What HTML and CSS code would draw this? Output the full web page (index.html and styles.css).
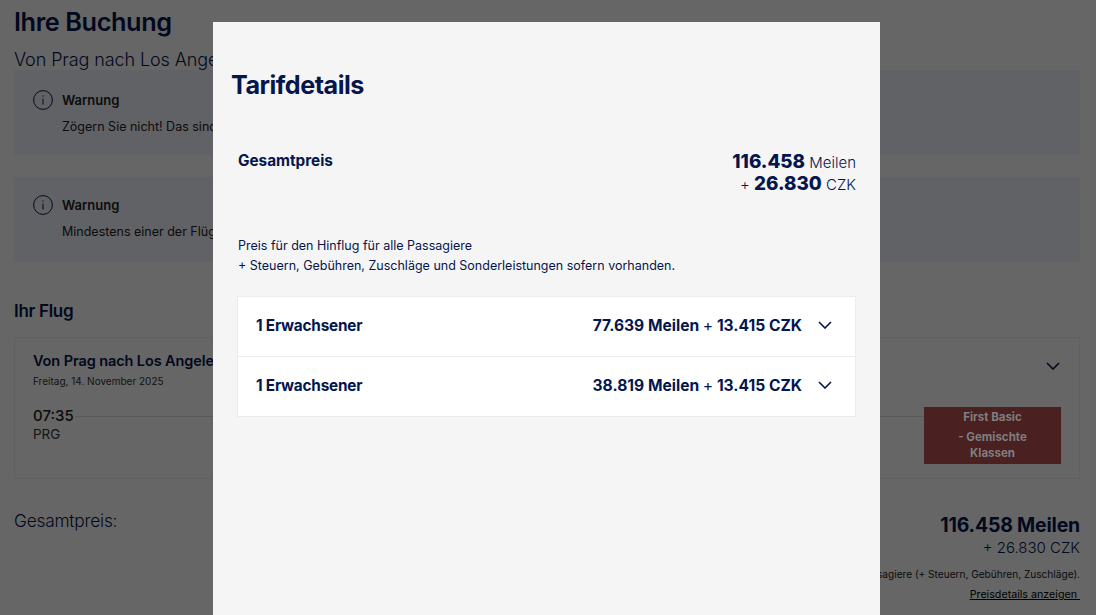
FILE: index.html
```html
<!DOCTYPE html>
<html lang="de">
<head>
  <meta charset="UTF-8">
  <meta name="viewport" content="width=device-width, initial-scale=1.0">
  <title>Ihre Buchung</title>
  <link rel="stylesheet" href="styles.css">
</head>
<body>
  <div class="page">
    <h1>Ihre Buchung</h1>
    <p class="route">Von Prag nach Los Angeles</p>

    <div class="warning">
      <svg class="info-icon" viewBox="0 0 20 20"><circle cx="10" cy="10" r="9.4"/><path d="M10 8.6v6M10 5.4v1.2"/></svg>
      <div>
        <div class="warning-title">Warnung</div>
        <div class="warning-text">Zögern Sie nicht! Das sind</div>
      </div>
    </div>
    <div class="warning warning-second">
      <svg class="info-icon" viewBox="0 0 20 20"><circle cx="10" cy="10" r="9.4"/><path d="M10 8.6v6M10 5.4v1.2"/></svg>
      <div>
        <div class="warning-title">Warnung</div>
        <div class="warning-text">Mindestens einer der Flüge</div>
      </div>
    </div>

    <h2>Ihr Flug</h2>
    <div class="flight-card">
      <div class="flight-head">
        <div>
          <div class="flight-title">Von Prag nach Los Angeles</div>
          <div class="flight-date">Freitag, 14. November 2025</div>
        </div>
        <svg class="chevron chevron-page" viewBox="0 0 14 8"><path d="M1 1l6 6 6-6"/></svg>
      </div>
      <div class="flight-body">
        <div class="flight-time">
          <div class="time">07:35</div>
          <div class="airport">PRG</div>
        </div>
        <div class="flight-line"></div>
        <button class="fare-button"><span class="fare-top">First Basic</span>- Gemischte Klassen</button>
      </div>
    </div>

    <div class="total">
      <div class="total-label">Gesamtpreis:</div>
      <div class="total-right">
        <div class="total-miles">116.458 Meilen</div>
        <div class="total-czk">+ 26.830 CZK</div>
        <div class="total-note">Preis für den Hinflug für alle Passagiere (+ Steuern, Gebühren, Zuschläge).</div>
        <a class="total-link" href="#">Preisdetails anzeigen&nbsp;</a>
      </div>
    </div>
  </div>

  <div class="backdrop"></div>

  <div class="modal">
    <h2 class="modal-title">Tarifdetails</h2>
    <div class="modal-content">
      <div class="price-head">
        <div class="price-label">Gesamtpreis</div>
        <div class="price-sum">
          <div><b>116.458</b> Meilen</div>
          <div>+ <b>26.830</b> CZK</div>
        </div>
      </div>
      <p class="price-note">Preis für den Hinflug für alle Passagiere<br>+ Steuern, Gebühren, Zuschläge und Sonderleistungen sofern vorhanden.</p>
      <div class="pax-list">
        <div class="pax-row">
          <span class="pax-name">1 Erwachsener</span>
          <span class="pax-price">77.639 Meilen <i>+</i> 13.415 CZK</span>
          <svg class="chevron" viewBox="0 0 14 8"><path d="M1 1l6 6 6-6"/></svg>
        </div>
        <div class="pax-row">
          <span class="pax-name">1 Erwachsener</span>
          <span class="pax-price">38.819 Meilen <i>+</i> 13.415 CZK</span>
          <svg class="chevron" viewBox="0 0 14 8"><path d="M1 1l6 6 6-6"/></svg>
        </div>
      </div>
    </div>
  </div>
</body>
</html>
```

FILE: styles.css
```css
html, body {
  height: 100%;
}
body {
  margin: 0;
  background-color: #fff;
  font-family: Inter, "Liberation Sans", sans-serif;
  color: #05164d;
  overflow: hidden;
}
.page {
  padding: 8px 16px 0 14px;
}
h1 {
  margin: 0;
  font-size: 25.3px;
  line-height: 28px;
  font-weight: 600;
  letter-spacing: -0.4px;
}
.route {
  margin: 12px 0 0;
  font-size: 18px;
  line-height: 24px;
  font-weight: 300;
  letter-spacing: -0.1px;
  white-space: nowrap;
}
.warning {
  display: flex;
  gap: 9px;
  height: 85px;
  box-sizing: border-box;
  margin-top: -2px;
  padding: 20px 19px;
  background-color: #f2f5fc;
}
.warning-second {
  margin-top: 22px;
  padding-top: 18px;
}
.info-icon {
  flex: none;
  width: 20px;
  height: 20px;
  fill: none;
  stroke: #05164d;
  stroke-width: 1;
}
.warning-title {
  font-size: 13px;
  line-height: 20px;
  font-weight: 600;
  color: #222;
}
.warning-text {
  margin-top: 7px;
  font-size: 12.5px;
  line-height: 20px;
  color: #222;
  white-space: nowrap;
}
h2 {
  margin: 37px 0 0;
  font-size: 17px;
  line-height: 24px;
  font-weight: 600;
  letter-spacing: -0.3px;
}
.flight-card {
  height: 142px;
  box-sizing: border-box;
  margin-top: 14px;
  padding: 13px 18px 0 18px;
  border: 1px solid #f0f0f0;
}
.flight-head {
  display: flex;
  justify-content: space-between;
}
.flight-title {
  font-size: 14.5px;
  line-height: 20px;
  font-weight: 600;
  letter-spacing: -0.1px;
}
.flight-date {
  margin-top: 2px;
  font-size: 10px;
  line-height: 16px;
  color: #333;
}
.chevron {
  width: 14px;
  height: 8px;
  fill: none;
  stroke: #05164d;
  stroke-width: 1.6;
}
.chevron-page {
  margin: 11px 1px 0 0;
}
.flight-body {
  display: flex;
  margin-top: 11px;
}
.flight-time {
  width: 50px;
}
.time {
  margin-top: 6px;
  font-size: 15px;
  line-height: 19px;
  font-weight: 500;
  color: #222;
}
.airport {
  font-size: 13.5px;
  line-height: 18px;
  color: #333;
}
.flight-line {
  flex: 1;
  height: 1px;
  margin: 16px 0 0 -8px;
  background-color: #ddd;
}
.fare-button {
  position: relative;
  z-index: 2;
  flex: none;
  width: 137px;
  height: 57px;
  margin-top: 7px;
  padding: 0 20px 2px;
  border: none;
  background-color: #4a2020;
  color: #7f7f7f;
  font-family: inherit;
  font-size: 11.5px;
  font-weight: 700;
  line-height: 16px;
  text-align: center;
}
.fare-top {
  display: block;
  margin-bottom: 4px;
}
.total {
  display: flex;
  justify-content: space-between;
  margin-top: 29px;
}
.total-label {
  margin-top: 1px;
  font-size: 17.3px;
  line-height: 24px;
  font-weight: 300;
  letter-spacing: -0.2px;
}
.total-right {
  margin-top: 5px;
  text-align: right;
}
.total-miles {
  font-size: 19.5px;
  line-height: 24px;
  font-weight: 700;
  letter-spacing: -0.2px;
}
.total-czk {
  font-size: 15px;
  line-height: 22px;
  font-weight: 300;
}
.total-note {
  margin-top: 7px;
  font-size: 10.1px;
  line-height: 16px;
  color: #222;
}
.total-link {
  display: block;
  margin-top: 5px;
  font-size: 10.7px;
  line-height: 16px;
  color: #000;
}
.backdrop {
  position: fixed;
  top: 0;
  left: 0;
  right: 0;
  bottom: 0;
  z-index: 1;
  background-color: rgba(0, 0, 0, 0.6);
}
.modal {
  position: fixed;
  top: 22px;
  left: 213px;
  bottom: 0;
  z-index: 3;
  width: 667px;
  box-sizing: border-box;
  padding: 48px 24px 0 19px;
  background-color: #f5f5f5;
}
.modal-title {
  margin: 0 0 0 -1px;
  font-size: 25.2px;
  line-height: 30px;
  font-weight: 700;
  letter-spacing: -0.5px;
}
.modal-content {
  padding-left: 5px;
}
.price-head {
  display: flex;
  justify-content: space-between;
  margin-top: 51px;
}
.price-label {
  padding-left: 1px;
  font-size: 15.3px;
  line-height: 20px;
  font-weight: 700;
}
.price-sum {
  font-size: 15px;
  line-height: 21px;
  font-weight: 300;
  text-align: right;
}
.price-sum b {
  font-size: 18.8px;
  font-weight: 800;
}
.price-note {
  margin: 41px 0 0;
  padding-left: 1px;
  font-size: 12.5px;
  line-height: 20px;
}
.pax-list {
  margin-top: 20px;
  background-color: #fff;
  border: 1px solid #ececec;
}
.pax-row {
  display: flex;
  align-items: center;
  height: 56px;
  padding: 0 23px 3px 18px;
}
.pax-row + .pax-row {
  border-top: 1px solid #ececec;
}
.pax-name {
  flex: 1;
  font-size: 15.3px;
  font-weight: 700;
  letter-spacing: -0.2px;
}
.pax-price {
  font-size: 15.6px;
  font-weight: 700;
}
.pax-price i {
  font-style: normal;
  font-weight: 400;
}
.pax-row .chevron {
  margin-left: 16px;
}
```
